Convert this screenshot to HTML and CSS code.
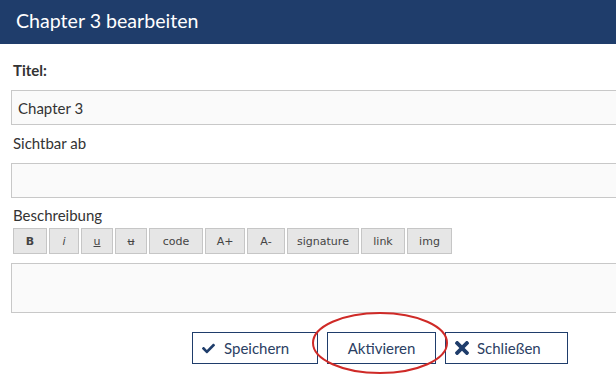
FILE: index.html
```html
<!DOCTYPE html>
<html lang="de">
<head>
    <meta charset="UTF-8">
    <meta name="viewport" content="width=device-width, initial-scale=1.0">
    <title>Chapter 3 bearbeiten</title>
    <link rel="stylesheet" href="styles.css">
</head>
<body>
    <header class="dialogTitle">Chapter 3 bearbeiten</header>
    <form class="editForm">
        <label class="fieldLabel bold" for="titel">Titel:</label>
        <input class="textField" id="titel" type="text" value="Chapter 3">

        <label class="fieldLabel spaced" for="sichtbar">Sichtbar ab</label>
        <input class="textField" id="sichtbar" type="text">

        <label class="fieldLabel spaced small" for="beschreibung">Beschreibung</label>
        <div class="toolbar">
            <button type="button" class="tbBtn w34"><b>B</b></button>
            <button type="button" class="tbBtn w30"><i>i</i></button>
            <button type="button" class="tbBtn w32"><u>u</u></button>
            <button type="button" class="tbBtn w32"><s>u</s></button>
            <button type="button" class="tbBtn w54">code</button>
            <button type="button" class="tbBtn w40">A+</button>
            <button type="button" class="tbBtn w38">A-</button>
            <button type="button" class="tbBtn w72">signature</button>
            <button type="button" class="tbBtn w44">link</button>
            <button type="button" class="tbBtn w45">img</button>
        </div>
        <textarea class="textArea" id="beschreibung"></textarea>

        <div class="buttonRow">
            <button type="button" class="actionBtn save">
                <svg class="icon" width="13" height="11" viewBox="0 60 512 392"><path fill="#1f3d6b" d="M173.898 439.404l-166.4-166.4c-9.997-9.997-9.997-26.206 0-36.204l36.203-36.204c9.997-9.998 26.207-9.998 36.204 0L192 312.69 432.095 72.596c9.997-9.997 26.207-9.997 36.204 0l36.203 36.204c9.997 9.997 9.997 26.206 0 36.204l-294.4 294.401c-9.998 9.997-26.207 9.997-36.204-.001z"/></svg>
                Speichern
            </button>
            <button type="button" class="actionBtn activate">Aktivieren</button>
            <button type="button" class="actionBtn close">
                <svg class="icon" width="14" height="14" viewBox="0 80 352 352"><path fill="#1f3d6b" d="M242.72 256l100.07-100.07c12.28-12.28 12.28-32.19 0-44.48l-22.24-22.24c-12.28-12.28-32.19-12.28-44.48 0L176 189.28 75.93 89.21c-12.28-12.280-32.19-12.28-44.48 0L9.21 111.45c-12.28 12.28-12.28 32.19 0 44.48L109.28 256 9.21 356.07c-12.28 12.28-12.28 32.19 0 44.48l22.24 22.24c12.28 12.28 32.2 12.28 44.48 0L176 322.72l100.07 100.07c12.28 12.28 32.2 12.28 44.48 0l22.24-22.24c12.28-12.28 12.28-32.19 0-44.48L242.72 256z"/></svg>
                Schließen
            </button>
        </div>
    </form>
    <svg class="markCircle" width="140" height="66" viewBox="0 0 140 66">
        <ellipse cx="69" cy="32" rx="67" ry="30" fill="none" stroke="#cf2a27" stroke-width="2"/>
    </svg>
</body>
</html>
```

FILE: styles.css
```css
* {
    box-sizing: border-box;
}
body {
    margin: 0;
    overflow: hidden;
    font-family: Lato, "Liberation Sans", sans-serif;
    color: #333;
    background: #fff;
}
.dialogTitle {
    height: 44px;
    line-height: 41px;
    padding-left: 16px;
    background: #1f3d6b;
    color: #fff;
    font-size: 19.6px;
}
.editForm {
    width: 618px;
    padding: 0 0 0 11px;
    display: flex;
    flex-direction: column;
    align-items: flex-start;
}
.fieldLabel {
    display: block;
    margin: 16px 0 10px 2px;
    line-height: 20px;
    font-size: 15px;
}
.fieldLabel.bold {
    font-weight: bold;
}
.fieldLabel.spaced {
    margin-top: 8px;
}
.fieldLabel.small {
    margin-top: 7px;
    margin-bottom: 3px;
}
.textField {
    width: 100%;
    height: 35px;
    padding: 0 6px;
    border: 1px solid #c8c8c8;
    background: #fafafa;
    font-family: Lato, "Liberation Sans", sans-serif;
    font-size: 15px;
    color: #333;
}
.toolbar {
    display: flex;
    gap: 2px;
    margin-left: 2px;
}
.tbBtn {
    height: 26px;
    padding: 0;
    border: 1px solid #c6c6c6;
    background: #e6e6e6;
    font-family: "DejaVu Sans", sans-serif;
    font-size: 11px;
    color: #444;
}
.tbBtn b {
    font-weight: 600;
}
.w30 { width: 30px; }
.w32 { width: 32px; }
.w34 { width: 34px; }
.w38 { width: 38px; }
.w40 { width: 40px; }
.w44 { width: 44px; }
.w45 { width: 45px; }
.w54 { width: 54px; }
.w72 { width: 72px; }
.textArea {
    width: 100%;
    height: 50px;
    margin-top: 9px;
    border: 1px solid #c8c8c8;
    background: #fafafa;
    resize: none;
}
.buttonRow {
    display: flex;
    gap: 9px;
    margin: 19px 0 0 181px;
}
.actionBtn {
    height: 32px;
    display: flex;
    align-items: center;
    border: 1px solid #1f3d6b;
    background: #fff;
    font-family: Lato, "Liberation Sans", sans-serif;
    font-size: 15px;
    color: #2b4063;
}
.actionBtn.save {
    width: 126px;
    padding-left: 9px;
}
.actionBtn.activate {
    width: 109px;
    justify-content: center;
}
.actionBtn.close {
    width: 123px;
    padding-left: 9px;
}
.icon {
    margin-right: 9px;
}
.actionBtn.close .icon {
    margin-right: 8px;
}
.markCircle {
    position: absolute;
    left: 311px;
    top: 311px;
}
```
